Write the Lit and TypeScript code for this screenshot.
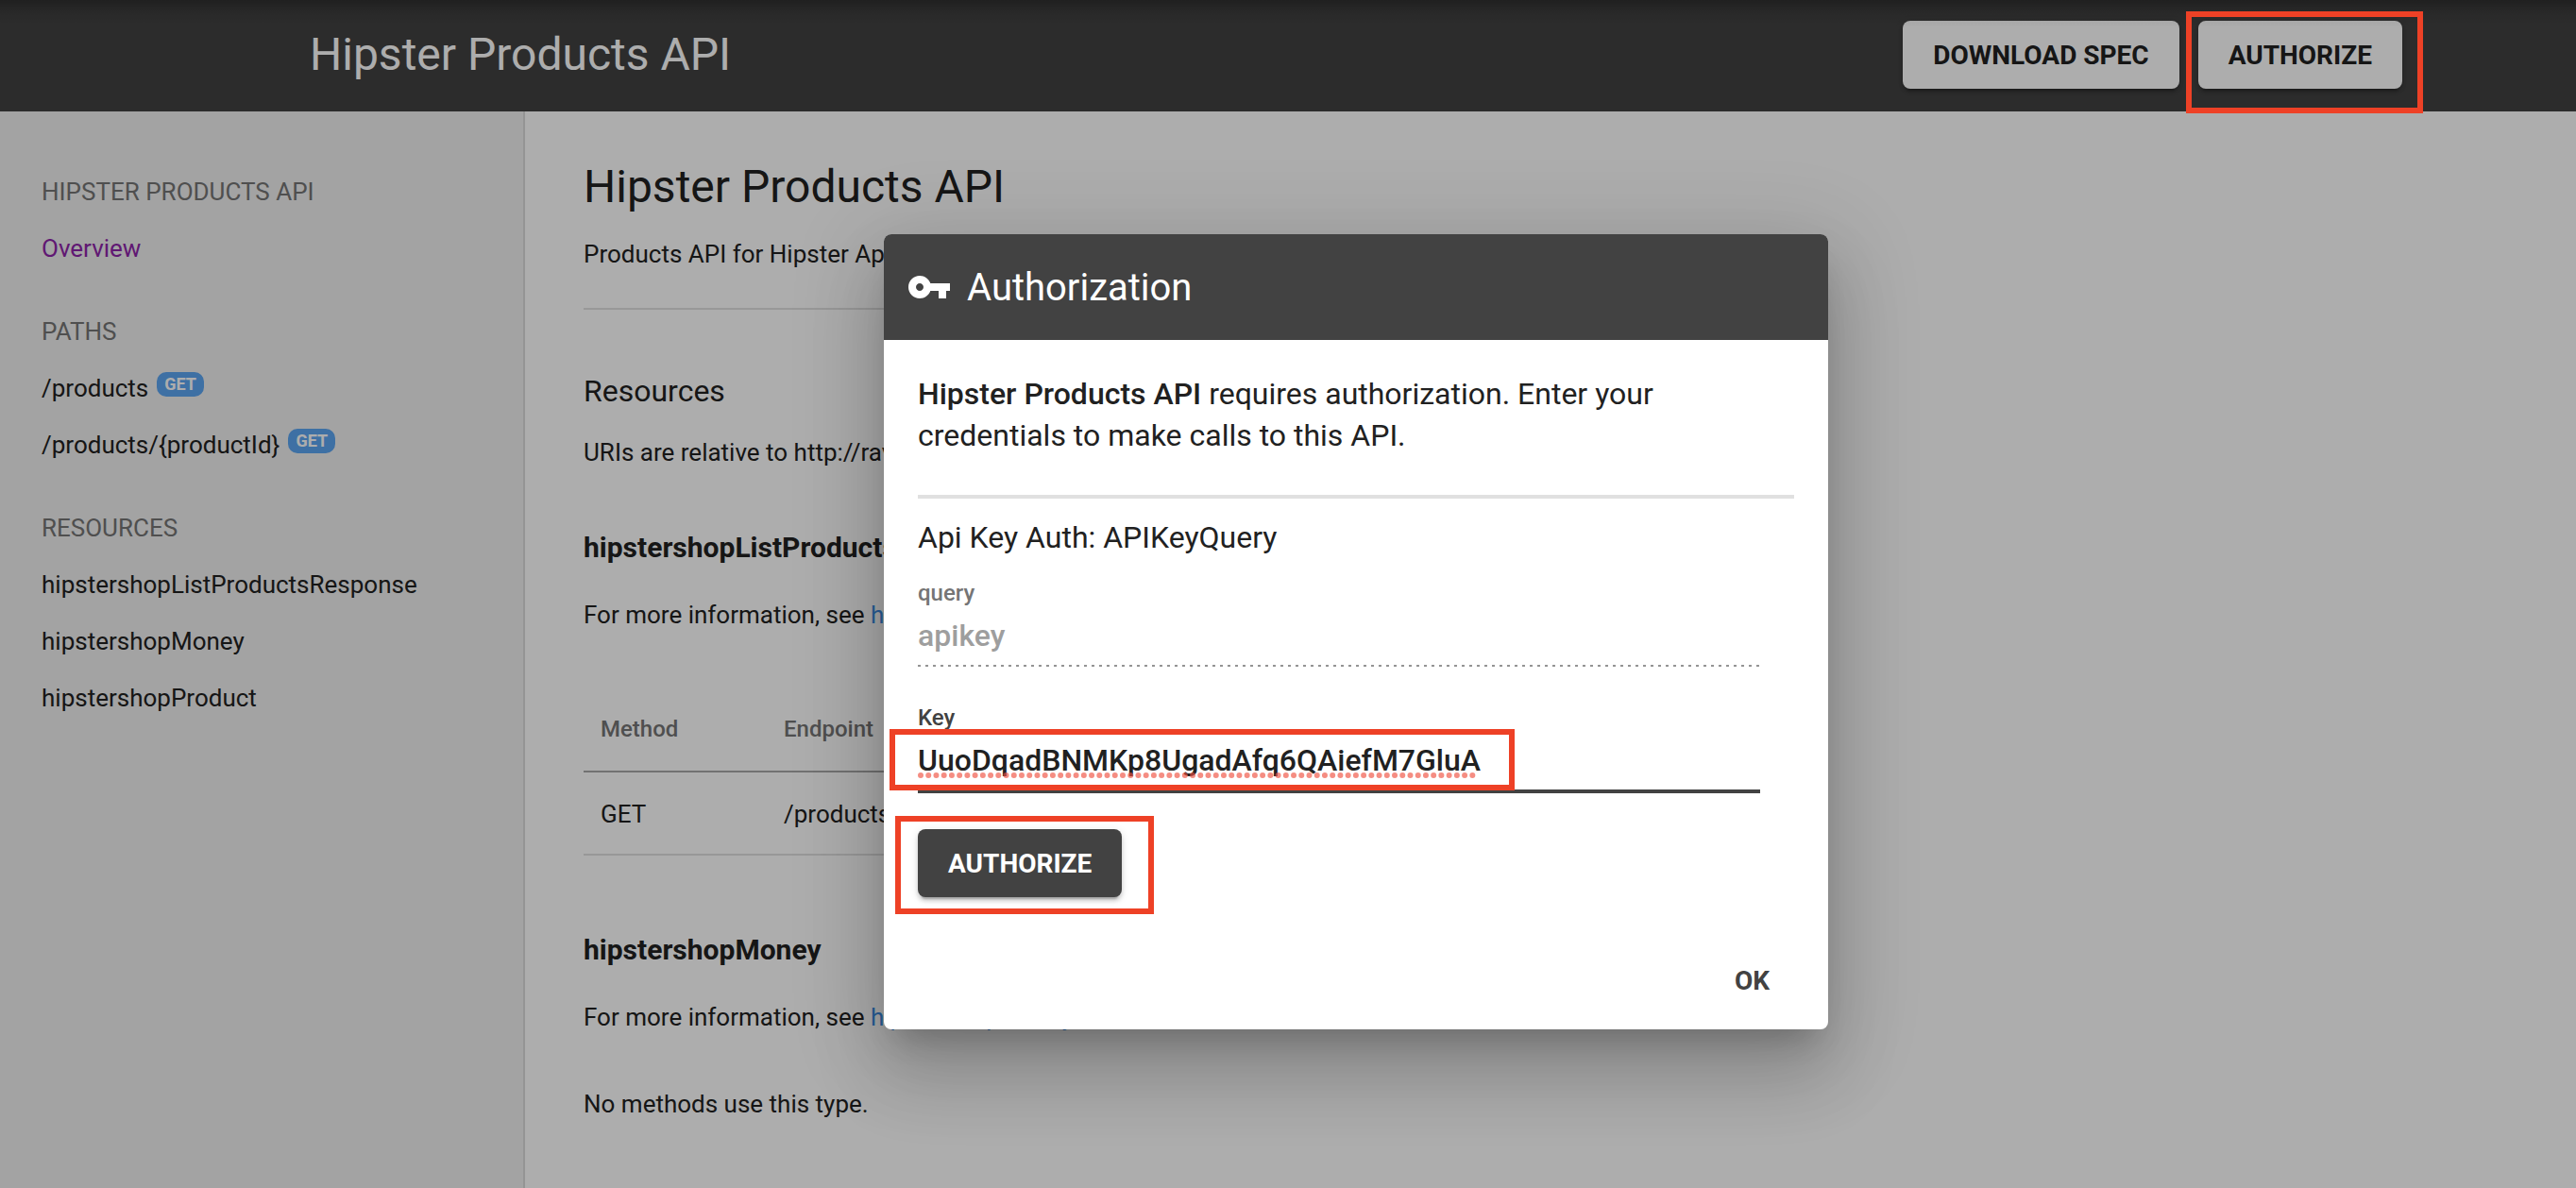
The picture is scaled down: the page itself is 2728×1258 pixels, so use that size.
import { LitElement, html, css, svg } from "lit";
import { customElement, property } from "lit/decorators.js";

interface NavItem {
  label: string;
  method?: string;
  visited?: boolean;
}

interface NavSection {
  title: string;
  items: NavItem[];
}

const NAV: NavSection[] = [
  { title: "Hipster Products API", items: [{ label: "Overview", visited: true }] },
  {
    title: "Paths",
    items: [
      { label: "/products", method: "GET" },
      { label: "/products/{productId}", method: "GET" },
    ],
  },
  {
    title: "Resources",
    items: [
      { label: "hipstershopListProductsResponse" },
      { label: "hipstershopMoney" },
      { label: "hipstershopProduct" },
    ],
  },
];

const keyIcon = svg`<path fill="currentColor" d="M12.65 10C11.83 7.67 9.61 6 7 6c-3.31 0-6 2.69-6 6s2.69 6 6 6c2.61 0 4.83-1.67 5.65-4H17v4h4v-4h2v-4H12.65zM7 14c-1.1 0-2-.9-2-2s.9-2 2-2 2 .9 2 2-.9 2-2 2z"/>`;

@customElement("site-nav")
class SiteNav extends LitElement {
  static styles = css`
    :host {
      display: block;
      box-sizing: border-box;
      padding: 55px 44px;
      background: #f0f0f0;
      border-right: 2px solid #dbdbdb;
      font-size: 26px;
      line-height: 60px;
    }
    .nav {
      display: flex;
      flex-direction: column;
      gap: 28px;
    }
    .heading {
      margin: 0;
      font-size: 26px;
      font-weight: 400;
      text-transform: uppercase;
      color: #757575;
    }
    .list {
      margin: 0;
      padding: 0;
      list-style: none;
    }
    .link {
      display: flex;
      align-items: center;
      gap: 9px;
      color: #212121;
      text-decoration: none;
    }
    .visited {
      color: #8e24aa;
    }
    .badge {
      margin-bottom: 8px;
      padding: 0 8px;
      border-radius: 10px;
      background: #5ca5f2;
      color: #fff;
      font-size: 18px;
      font-weight: 700;
      line-height: 26px;
    }
  `;

  render() {
    return html`<nav class="nav" aria-label="API reference">
      ${NAV.map(
        (section) => html`<section>
          <h2 class="heading">${section.title}</h2>
          <ul class="list">
            ${section.items.map(
              (item) => html`<li>
                <a class="link ${item.visited ? "visited" : ""}" href="#${item.label}"
                  >${item.label}${item.method
                    ? html`<span class="badge">${item.method}</span>`
                    : ""}</a
                >
              </li>`
            )}
          </ul>
        </section>`
      )}
    </nav>`;
  }
}

@customElement("api-overview")
class ApiOverview extends LitElement {
  static styles = css`
    :host {
      display: block;
      padding: 48px 62px;
      font-size: 26px;
      line-height: 38px;
    }
    .content {
      max-width: 1200px;
    }
    .title {
      margin: 0 0 20px;
      font-size: 48px;
      font-weight: 400;
      line-height: 64px;
    }
    .text {
      margin: 0;
    }
    .rule {
      height: 2px;
      margin: 38px 0 64px;
      border: 0;
      background: #e0e0e0;
    }
    .subtitle {
      margin: 0 0 24px;
      font-size: 32px;
      font-weight: 400;
      line-height: 44px;
    }
    .type {
      margin: 62px 0 32px;
      font-size: 30px;
      font-weight: 700;
      line-height: 40px;
    }
    .table + .type {
      margin-top: 80px;
    }
    .link {
      color: #3b8ce4;
      text-decoration: none;
    }
    .table {
      width: 100%;
      margin-top: 60px;
      border-collapse: separate;
      border-spacing: 0;
      text-align: left;
    }
    .head {
      padding: 28px 18px 30px;
      border-bottom: 2px solid #a8a8a8;
      color: #757575;
      font-size: 24px;
      font-weight: 500;
      line-height: 28px;
    }
    .cell {
      padding: 25px 18px 23px;
      border-bottom: 2px solid #e0e0e0;
    }
    .method {
      width: 158px;
    }
    .note {
      margin: 54px 0 0;
    }
  `;

  render() {
    return html`<div class="content">
      <h1 class="title">Hipster Products API</h1>
      <p class="text">Products API for Hipster App</p>
      <hr class="rule" />
      <h2 class="subtitle">Resources</h2>
      <p class="text">URIs are relative to http://rav</p>
      <h3 class="type">hipstershopListProductsResponse</h3>
      <p class="text">
        For more information, see
        <a class="link" href="#hipstershopListProductsResponse">hipstershopListProductsResponse</a>
      </p>
      <table class="table">
        <thead>
          <tr>
            <th class="head method" scope="col">Method</th>
            <th class="head" scope="col">Endpoint</th>
          </tr>
        </thead>
        <tbody>
          <tr>
            <td class="cell method">GET</td>
            <td class="cell">/products</td>
          </tr>
        </tbody>
      </table>
      <h3 class="type">hipstershopMoney</h3>
      <p class="text">
        For more information, see
        <a class="link" href="#hipstershopMoney">hipstershopMoney</a>
      </p>
      <p class="note">No methods use this type.</p>
    </div>`;
  }
}

@customElement("auth-dialog")
class AuthDialog extends LitElement {
  @property() api = "Hipster Products API";
  @property() key = "UuoDqadBNMKp8UgadAfq6QAiefM7GluA";

  static styles = css`
    :host {
      display: block;
      box-sizing: border-box;
      width: 1000px;
      max-width: 100%;
      border-radius: 8px;
      background: #fff;
      color: #212121;
      font-size: 32px;
      line-height: 44px;
      box-shadow: 0 22px 30px -14px rgba(0, 0, 0, 0.2), 0 48px 76px 6px rgba(0, 0, 0, 0.14),
        0 18px 92px 16px rgba(0, 0, 0, 0.12);
    }
    .bar {
      display: flex;
      align-items: center;
      gap: 16px;
      height: 112px;
      padding: 0 24px;
      border-radius: 8px 8px 0 0;
      background: #424242;
      color: #fff;
    }
    .icon {
      width: 48px;
      height: 48px;
    }
    .title {
      margin: 0;
      padding-top: 2px;
      font-size: 40px;
      font-weight: 400;
      line-height: 48px;
    }
    .body {
      padding: 35px 36px 0;
    }
    .text {
      margin: 0;
    }
    .strong {
      font-weight: 500;
    }
    .rule {
      height: 4px;
      margin: 41px 0 19px;
      border: 0;
      background: #e0e0e0;
    }
    .form {
      display: flex;
      flex-direction: column;
      align-items: flex-start;
      padding: 23px 36px 0 0;
    }
    .field {
      position: relative;
      display: flex;
      flex-direction: column;
      align-self: stretch;
      margin-bottom: 38px;
    }
    .label {
      color: #424242;
      font-size: 24px;
      font-weight: 500;
      line-height: 28px;
    }
    .muted {
      color: #757575;
    }
    .input {
      height: 62px;
      box-sizing: content-box;
      padding: 0;
      border: 0;
      border-radius: 0;
      border-bottom: 4px solid #424242;
      outline: 0;
      background: transparent;
      color: #212121;
      font: 500 32px/44px Roboto, "Open Sans", sans-serif;
    }
    .input:disabled {
      margin-bottom: 2px;
      padding-bottom: 2px;
      border-bottom: 0;
      background: linear-gradient(to right, #949494 0, #949494 33%, transparent 0) bottom left / 8px 2px repeat-x;
      color: #9e9e9e;
    }
    .squiggle {
      position: absolute;
      left: 0;
      bottom: 16px;
      width: 592px;
      height: 6px;
      pointer-events: none;
    }
    .button {
      position: relative;
      height: 72px;
      padding: 2px 32px 0;
      border: 0;
      border-radius: 8px;
      background: #424242;
      color: #fff;
      font: 700 28px/70px Roboto, "Open Sans", sans-serif;
      text-transform: uppercase;
      box-shadow: 0 6px 2px -4px rgba(0, 0, 0, 0.2), 0 4px 4px rgba(0, 0, 0, 0.14),
        0 2px 10px rgba(0, 0, 0, 0.12);
    }
    .actions {
      display: flex;
      justify-content: flex-end;
      padding: 52px 46px 16px;
    }
    .flat {
      padding: 2px 16px 0;
      background: transparent;
      color: #424242;
      box-shadow: none;
    }
    .callout {
      position: absolute;
      box-sizing: border-box;
      border: 6px solid #ee4126;
      pointer-events: none;
    }
    .callout-key {
      left: -30px;
      top: 26px;
      width: 662px;
      height: 65px;
    }
    .callout-button {
      inset: -14px -34px -18px -24px;
    }
  `;

  render() {
    return html`<div class="bar">
        <svg class="icon" viewBox="0 0 24 24" aria-hidden="true">${keyIcon}</svg>
        <h2 class="title">Authorization</h2>
      </div>
      <div class="body">
        <p class="text">
          <b class="strong">${this.api}</b> requires authorization. Enter your credentials to make
          calls to this API.
        </p>
        <hr class="rule" />
        <p class="text">Api Key Auth: APIKeyQuery</p>
        <form class="form" @submit=${(e: Event) => e.preventDefault()}>
          <div class="field">
            <label class="label muted" for="location">query</label>
            <input class="input" id="location" value="apikey" disabled />
          </div>
          <div class="field">
            <label class="label" for="key">Key</label>
            <input class="input" id="key" spellcheck="false" .value=${this.key} />
            <svg class="squiggle" viewBox="0 0 592 6" aria-hidden="true">
              <path
                d="M3 3H589"
                stroke="#f0503f"
                stroke-opacity=".65"
                stroke-width="6"
                stroke-linecap="round"
                stroke-dasharray="0 8.23"
              />
            </svg>
            <span class="callout callout-key"></span>
          </div>
          <button class="button" type="submit">
            Authorize<span class="callout callout-button"></span>
          </button>
        </form>
      </div>
      <div class="actions"><button class="button flat" type="button">OK</button></div>`;
  }
}

@customElement("app-root")
class AppRoot extends LitElement {
  static styles = css`
    :host {
      position: relative;
      display: flex;
      flex-direction: column;
      min-height: 100vh;
      background: #fff;
      color: #212121;
      font-family: Roboto, "Open Sans", sans-serif;
    }
    .header {
      display: flex;
      align-items: center;
      justify-content: space-between;
      box-sizing: border-box;
      height: 118px;
      padding: 0 184px 2px 328px;
      background: #424242;
      color: #fff;
    }
    .brand {
      font-size: 48px;
      line-height: 64px;
    }
    .tools {
      display: flex;
      gap: 20px;
    }
    .button {
      position: relative;
      height: 72px;
      padding: 2px 32px 0;
      border: 0;
      border-radius: 8px;
      background: #fff;
      color: #212121;
      font: 700 28px/70px Roboto, "Open Sans", sans-serif;
      text-transform: uppercase;
      box-shadow: 0 6px 2px -4px rgba(0, 0, 0, 0.2), 0 4px 4px rgba(0, 0, 0, 0.14),
        0 2px 10px rgba(0, 0, 0, 0.12);
    }
    .callout {
      position: absolute;
      inset: -10px -22px -26px -13px;
      z-index: 3;
      box-sizing: border-box;
      border: 6px solid #ee4126;
      pointer-events: none;
    }
    .page {
      flex: 1;
      display: grid;
      grid-template-columns: 556px 1fr;
    }
    .scrim {
      position: absolute;
      inset: 0;
      z-index: 2;
      display: flex;
      align-items: center;
      justify-content: center;
      box-sizing: border-box;
      padding: 80px 0 0 144px;
      background: rgba(0, 0, 0, 0.32);
    }
    .edge {
      position: absolute;
      inset: 0 0 auto;
      z-index: 1;
      height: 28px;
      background: linear-gradient(rgba(0, 0, 0, 0.28), rgba(0, 0, 0, 0.08) 50%, transparent);
      pointer-events: none;
    }
  `;

  render() {
    return html`<header class="header">
        <span class="brand">Hipster Products API</span>
        <div class="tools">
          <button class="button" type="button">Download spec</button>
          <button class="button" type="button">Authorize<span class="callout"></span></button>
        </div>
      </header>
      <div class="page">
        <site-nav></site-nav>
        <api-overview></api-overview>
      </div>
      <div class="edge"></div>
      <div class="scrim">
        <auth-dialog role="dialog" aria-modal="true" aria-label="Authorization"></auth-dialog>
      </div>`;
  }
}
